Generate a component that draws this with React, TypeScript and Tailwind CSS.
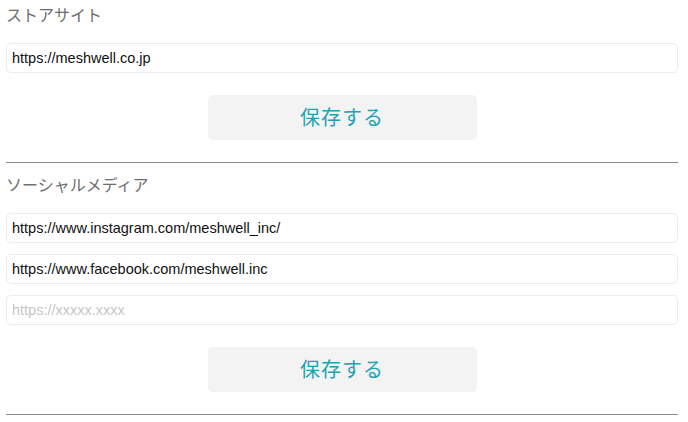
import { useState } from 'react';

const FONT = { fontFamily: '"Liberation Sans", "Noto Sans CJK JP", sans-serif' };

function UrlInput({ value, placeholder }: { value?: string; placeholder?: string }) {
  const [text, setText] = useState(value ?? '');
  return (
    <input
      type="text"
      value={text}
      onChange={(e) => setText(e.target.value)}
      placeholder={placeholder}
      className="block w-full h-[30px] px-[5px] rounded-[5px] border border-[#ececec] bg-white text-[14.5px] text-[#111] placeholder:text-[#c6c6c6] focus:outline-none"
    />
  );
}

function SaveButton() {
  return (
    <div className="flex justify-center mt-[22px]">
      <button
        type="button"
        className="w-[269px] h-[45px] rounded-[5px] bg-[#f3f3f3] text-[20px] tracking-[1px] text-[#1fa2b4]"
      >
        保存する
      </button>
    </div>
  );
}

function Section({ title, children }: { title: string; children: React.ReactNode }) {
  return (
    <section className="pb-[22px] border-b border-[#8a8a8a]">
      <h2 className="h-[32px] leading-[32px] text-[16px] text-[#6e6e6e] mb-[11px]">{title}</h2>
      <div className="flex flex-col gap-[11px]">{children}</div>
      <SaveButton />
    </section>
  );
}

export default function App() {
  return (
    <div className="w-[688px] h-[422px] bg-white pl-[6px] pr-[10px] overflow-hidden" style={FONT}>
      <Section title="ストアサイト">
        <UrlInput value="https://meshwell.co.jp" />
      </Section>
      <div className="h-[7px]" />
      <Section title="ソーシャルメディア">
        <UrlInput value="https://www.instagram.com/meshwell_inc/" />
        <UrlInput value="https://www.facebook.com/meshwell.inc" />
        <UrlInput placeholder="https://xxxxx.xxxx" />
      </Section>
    </div>
  );
}
